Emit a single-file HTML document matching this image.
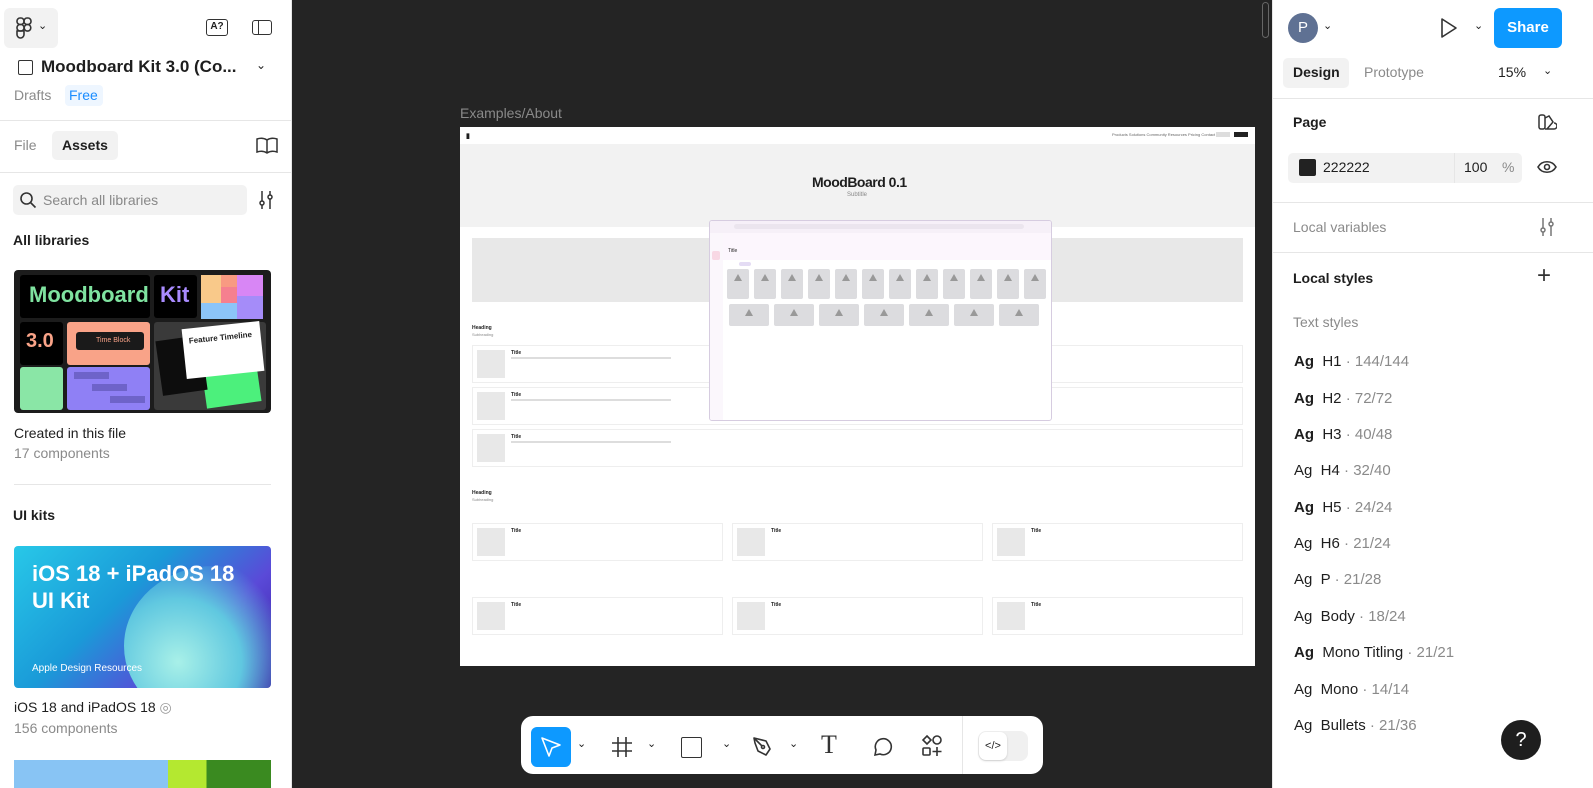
<!DOCTYPE html>
<html><head><meta charset="utf-8"><style>
*{box-sizing:border-box;margin:0;padding:0}
body{width:1593px;height:788px;overflow:hidden;background:#242424;font-family:"Liberation Sans",sans-serif;color:#1e1e1e;position:relative}
.abs{position:absolute}
.lp{left:0;top:0;width:292px;height:788px;background:#fff;border-right:1px solid #e6e6e6}
.rp{left:1272px;top:0;width:321px;height:788px;background:#fff;border-left:1px solid #e6e6e6}
.t{position:absolute;white-space:nowrap}
.hr{position:absolute;height:1px;background:#e6e6e6}
.g{color:#8a8a8a}
.card{position:absolute;background:#fff;border:1px solid #eee}
.ph{position:absolute;background:#e8e8e8}
.tile{position:absolute;width:22px;height:30px;background:#dcdcdf;border-radius:2px}
.tile::after{content:"";position:absolute;left:50%;top:5px;margin-left:-4px;border:4px solid transparent;border-bottom:7px solid #999;border-top:0}
</style></head><body>
<div class="abs lp">
 <div class="abs" style="left:4px;top:8px;width:54px;height:40px;background:#f2f2f2;border-radius:6px"></div>
 <svg class="abs" style="left:16px;top:17px" width="16" height="22" viewBox="0 0 16 22" fill="none" stroke="#333" stroke-width="1.6"><rect x="1" y="1" width="7" height="6.5" rx="3"/><rect x="8" y="1" width="7" height="6.5" rx="3"/><rect x="1" y="7.5" width="7" height="6.5" rx="3"/><circle cx="11.5" cy="10.8" r="3.3"/><path d="M1 14h7v3.5a3.5 3.5 0 1 1-7 0z"/></svg>
 <div class="t" style="left:38px;top:19px;font-size:11px">⌄</div>
 <div class="abs" style="left:206px;top:19px;width:22px;height:17px;border:1.5px solid #333;border-radius:3px;font-size:10px;font-weight:bold;text-align:center;line-height:14px">A?</div>
 <div class="abs" style="left:252px;top:20px;width:20px;height:15px;border:1.5px solid #333;border-radius:3px"><div style="width:6px;height:100%;border-right:1.5px solid #333"></div></div>
 <div class="abs" style="left:18px;top:60px;width:15px;height:15px;border:1.6px solid #333;border-radius:2px"></div>
 <div class="t" style="left:41px;top:57px;font-size:17px;font-weight:bold">Moodboard Kit 3.0 (Co...</div>
 <div class="t" style="left:256px;top:58px;font-size:12px">⌄</div>
 <div class="t g" style="left:14px;top:87px;font-size:14px">Drafts</div>
 <div class="abs" style="left:65px;top:85px;width:38px;height:21px;background:#eef6ff;border-radius:4px"></div>
 <div class="t" style="left:69px;top:87px;font-size:14px;color:#1a8cff">Free</div>
 <div class="hr" style="left:0;top:120px;width:292px"></div>
 <div class="t g" style="left:14px;top:137px;font-size:14px">File</div>
 <div class="abs" style="left:52px;top:131px;width:66px;height:29px;background:#f2f2f2;border-radius:5px"></div>
 <div class="t" style="left:62px;top:137px;font-size:14px;font-weight:bold">Assets</div>
 <svg class="abs" style="left:256px;top:137px" width="22" height="17" viewBox="0 0 22 17" fill="none" stroke="#333" stroke-width="1.5"><path d="M11 3C8 1 4 1 1 2v13c3-1 7-1 10 1 3-2 7-2 10-1V2c-3-1-7-1-10 1zM11 3v13"/></svg>
 <div class="hr" style="left:0;top:172px;width:292px"></div>
 <div class="abs" style="left:13px;top:185px;width:234px;height:30px;background:#f2f2f2;border-radius:5px"></div>
 <svg class="abs" style="left:19px;top:191px" width="18" height="18" viewBox="0 0 18 18" fill="none" stroke="#333" stroke-width="1.6"><circle cx="7.5" cy="7.5" r="5.5"/><path d="M11.5 11.5l5 5"/></svg>
 <div class="t g" style="left:43px;top:192px;font-size:14px;color:#888">Search all libraries</div>
 <svg class="abs" style="left:257px;top:190px" width="18" height="20" viewBox="0 0 18 20" fill="none" stroke="#333" stroke-width="1.5"><path d="M5 1v10M5 15v4M13 1v4M13 9v10"/><circle cx="5" cy="13" r="2"/><circle cx="13" cy="7" r="2"/></svg>
 <div class="t" style="left:13px;top:232px;font-size:14px;font-weight:bold">All libraries</div>
 <div class="abs" style="left:14px;top:270px;width:257px;height:143px;background:#1c1c1c;border-radius:4px;overflow:hidden">
  <div class="abs" style="left:6px;top:5px;width:130px;height:43px;background:#000;border-radius:3px"></div>
  <div class="t" style="left:15px;top:12px;font-size:22px;font-weight:bold;color:#7fe3a0">Moodboard</div>
  <div class="abs" style="left:140px;top:5px;width:43px;height:43px;background:#000;border-radius:3px"></div>
  <div class="t" style="left:146px;top:12px;font-size:22px;font-weight:bold;color:#a98bff">Kit</div>
  <div class="abs" style="left:187px;top:5px;width:20px;height:28px;background:#f9c98a"></div>
  <div class="abs" style="left:207px;top:5px;width:16px;height:12px;background:#f89a82"></div>
  <div class="abs" style="left:207px;top:17px;width:16px;height:16px;background:#f5808f"></div>
  <div class="abs" style="left:223px;top:5px;width:26px;height:21px;background:#d886f5"></div>
  <div class="abs" style="left:187px;top:33px;width:36px;height:16px;background:#8cc4f8"></div>
  <div class="abs" style="left:223px;top:26px;width:26px;height:23px;background:#a58cf9"></div>
  <div class="abs" style="left:6px;top:52px;width:43px;height:43px;background:#000;border-radius:3px"></div>
  <div class="t" style="left:12px;top:60px;font-size:20px;font-weight:bold;color:#f9a388">3.0</div>
  <div class="abs" style="left:53px;top:52px;width:83px;height:43px;background:#f9a388;border-radius:3px"></div>
  <div class="abs" style="left:62px;top:62px;width:68px;height:18px;background:#1a1a1a;border-radius:3px;font-size:7px;color:#f9a388;padding:5px 0 0 20px">Time Block</div>
  <div class="abs" style="left:6px;top:97px;width:43px;height:43px;background:#8ae6a6;border-radius:3px"></div>
  <div class="abs" style="left:53px;top:97px;width:83px;height:43px;background:#8f80f5;border-radius:3px"></div>
  <div class="abs" style="left:60px;top:102px;width:35px;height:7px;background:#6e63c9"></div>
  <div class="abs" style="left:78px;top:114px;width:35px;height:7px;background:#6e63c9"></div>
  <div class="abs" style="left:96px;top:126px;width:35px;height:7px;background:#6e63c9"></div>
  <div class="abs" style="left:140px;top:52px;width:112px;height:88px;background:#3a3a3a;border-radius:3px"></div>
  <div class="abs" style="left:190px;top:95px;width:55px;height:40px;background:#4cf07c;transform:rotate(-8deg)"></div>
  <div class="abs" style="left:145px;top:68px;width:45px;height:55px;background:#0d0d0d;transform:rotate(-8deg)"></div>
  <div class="abs" style="left:170px;top:55px;width:78px;height:50px;background:#fff;transform:rotate(-6deg);font-size:8px;font-weight:bold;padding:8px 0 0 6px">Feature Timeline</div>
 </div>
 <div class="t" style="left:14px;top:425px;font-size:14px">Created in this file</div>
 <div class="t g" style="left:14px;top:445px;font-size:14px">17 components</div>
 <div class="hr" style="left:14px;top:484px;width:257px"></div>
 <div class="t" style="left:13px;top:507px;font-size:14px;font-weight:bold">UI kits</div>
 <div class="abs" style="left:14px;top:546px;width:257px;height:142px;border-radius:4px;overflow:hidden;background:linear-gradient(135deg,#28c8e8 0%,#1a9ad8 40%,#5a4ad8 70%,#3a1aa0 100%)">
  <div class="abs" style="left:110px;top:20px;width:180px;height:160px;border-radius:50%;background:radial-gradient(circle at 30% 60%,#a8f0e8 0%,#60c8e0 40%,transparent 70%)"></div>
  <div class="t" style="left:18px;top:14px;font-size:22px;font-weight:bold;color:#fff;line-height:27px">iOS 18 + iPadOS 18<br>UI Kit</div>
  <div class="t" style="left:18px;top:117px;font-size:10px;color:#fff">Apple Design Resources</div>
 </div>
 <div class="t" style="left:14px;top:699px;font-size:14px">iOS 18 and iPadOS 18 <span style="color:#999">◎</span></div>
 <div class="t g" style="left:14px;top:720px;font-size:14px">156 components</div>
 <div class="abs" style="left:14px;top:760px;width:257px;height:28px;background:linear-gradient(90deg,#88c4f4 0 60%,#b4e830 60% 75%,#3a8a20 75%)"></div>
</div>
<div class="abs" style="left:1262px;top:2px;width:7px;height:36px;border:1px solid #666;border-radius:4px"></div>
<div class="t" style="left:460px;top:105px;font-size:14px;color:#8a8a8a">Examples/About</div>
<div class="abs" style="left:460px;top:127px;width:795px;height:539px;background:#fff;overflow:hidden">
 <div class="t" style="left:6px;top:5px;font-size:7px;font-weight:bold">▮</div>
 <div class="t" style="left:652px;top:5px;font-size:4px;color:#666">Products Solutions Community Resources Pricing Contact</div>
 <div class="abs" style="left:756px;top:5px;width:14px;height:5px;background:#ddd"></div>
 <div class="abs" style="left:774px;top:5px;width:14px;height:5px;background:#222"></div>
 <div class="abs" style="left:0;top:17px;width:795px;height:83px;background:#f2f2f2"></div>
 <div class="t" style="left:352px;top:47px;font-size:14px;font-weight:bold;letter-spacing:-0.5px">MoodBoard 0.1</div>
 <div class="t" style="left:387px;top:65px;font-size:6px;color:#888">Subtitle</div>
 <div class="abs" style="left:12px;top:111px;width:771px;height:64px;background:#e8e8e8"></div>
 <div class="t" style="left:12px;top:198px;font-size:5px;font-weight:bold">Heading</div>
 <div class="t" style="left:12px;top:205px;font-size:4px;color:#888">Subheading</div>
 <div class="card" style="left:12px;top:218px;width:771px;height:38px"><div class="ph" style="left:4px;top:4px;width:28px;height:28px"></div><div class="t" style="left:38px;top:4px;font-size:5px;font-weight:bold">Title</div><div class="abs" style="left:38px;top:11px;width:160px;height:2px;background:#ddd"></div></div>
 <div class="card" style="left:12px;top:260px;width:771px;height:38px"><div class="ph" style="left:4px;top:4px;width:28px;height:28px"></div><div class="t" style="left:38px;top:4px;font-size:5px;font-weight:bold">Title</div><div class="abs" style="left:38px;top:11px;width:160px;height:2px;background:#ddd"></div></div>
 <div class="card" style="left:12px;top:302px;width:771px;height:38px"><div class="ph" style="left:4px;top:4px;width:28px;height:28px"></div><div class="t" style="left:38px;top:4px;font-size:5px;font-weight:bold">Title</div><div class="abs" style="left:38px;top:11px;width:160px;height:2px;background:#ddd"></div></div>
 <div class="t" style="left:12px;top:363px;font-size:5px;font-weight:bold">Heading</div>
 <div class="t" style="left:12px;top:370px;font-size:4px;color:#888">Subheading</div>
 <div class="card" style="left:12px;top:396px;width:251px;height:38px"><div class="ph" style="left:4px;top:4px;width:28px;height:28px"></div><div class="t" style="left:38px;top:4px;font-size:5px;font-weight:bold">Title</div></div>
 <div class="card" style="left:272px;top:396px;width:251px;height:38px"><div class="ph" style="left:4px;top:4px;width:28px;height:28px"></div><div class="t" style="left:38px;top:4px;font-size:5px;font-weight:bold">Title</div></div>
 <div class="card" style="left:532px;top:396px;width:251px;height:38px"><div class="ph" style="left:4px;top:4px;width:28px;height:28px"></div><div class="t" style="left:38px;top:4px;font-size:5px;font-weight:bold">Title</div></div>
 <div class="card" style="left:12px;top:470px;width:251px;height:38px"><div class="ph" style="left:4px;top:4px;width:28px;height:28px"></div><div class="t" style="left:38px;top:4px;font-size:5px;font-weight:bold">Title</div></div>
 <div class="card" style="left:272px;top:470px;width:251px;height:38px"><div class="ph" style="left:4px;top:4px;width:28px;height:28px"></div><div class="t" style="left:38px;top:4px;font-size:5px;font-weight:bold">Title</div></div>
 <div class="card" style="left:532px;top:470px;width:251px;height:38px"><div class="ph" style="left:4px;top:4px;width:28px;height:28px"></div><div class="t" style="left:38px;top:4px;font-size:5px;font-weight:bold">Title</div></div>
 <div class="abs" style="left:249px;top:93px;width:343px;height:201px;background:#fff;border:1.5px solid #d6cce0;border-radius:3px;overflow:hidden">
  <div class="abs" style="left:0;top:0;width:343px;height:12px;background:#f6f0f8"></div>
  <div class="abs" style="left:24px;top:3px;width:290px;height:5px;background:#ebe5ee;border-radius:3px"></div>
  <div class="abs" style="left:0;top:12px;width:13px;height:189px;background:#fbf7fc"></div>
  <div class="abs" style="left:2px;top:30px;width:8px;height:9px;background:#f8d8e4;border-radius:2px"></div>
  <div class="abs" style="left:13px;top:12px;width:330px;height:27px;background:#fcf6fd"></div>
  <div class="t" style="left:18px;top:27px;font-size:5px">Title</div>
  <div class="abs" style="left:29px;top:41px;width:12px;height:4px;background:#e4dcf4;border-radius:2px"></div>
  <div style="position:absolute;left:17px;top:48px;width:320px">
   <div class="tile" style="left:0;top:0"></div><div class="tile" style="left:27px;top:0"></div><div class="tile" style="left:54px;top:0"></div><div class="tile" style="left:81px;top:0"></div><div class="tile" style="left:108px;top:0"></div><div class="tile" style="left:135px;top:0"></div><div class="tile" style="left:162px;top:0"></div><div class="tile" style="left:189px;top:0"></div><div class="tile" style="left:216px;top:0"></div><div class="tile" style="left:243px;top:0"></div><div class="tile" style="left:270px;top:0"></div><div class="tile" style="left:297px;top:0"></div>
   <div class="tile" style="left:2px;top:35px;width:40px;height:22px"></div><div class="tile" style="left:47px;top:35px;width:40px;height:22px"></div><div class="tile" style="left:92px;top:35px;width:40px;height:22px"></div><div class="tile" style="left:137px;top:35px;width:40px;height:22px"></div><div class="tile" style="left:182px;top:35px;width:40px;height:22px"></div><div class="tile" style="left:227px;top:35px;width:40px;height:22px"></div><div class="tile" style="left:272px;top:35px;width:40px;height:22px"></div>
  </div>
 </div>
</div>
<div class="abs" style="left:521px;top:716px;width:522px;height:58px;background:#fff;border-radius:12px"></div>
<div class="abs" style="left:531px;top:727px;width:40px;height:40px;background:#0d99ff;border-radius:6px"></div>
<svg class="abs" style="left:539px;top:735px" width="24" height="24" viewBox="0 0 24 24" fill="none" stroke="#fff" stroke-width="1.6" stroke-linejoin="round"><path d="M3 3l18 7-8 3-3 8z"/></svg>
<div class="t" style="left:577px;top:737px;font-size:11px">⌄</div>
<svg class="abs" style="left:610px;top:735px" width="24" height="24" viewBox="0 0 24 24" fill="none" stroke="#333" stroke-width="1.6"><path d="M8 2v20M16 2v20M2 8h20M2 16h20"/></svg>
<div class="t" style="left:647px;top:737px;font-size:11px">⌄</div>
<div class="abs" style="left:681px;top:737px;width:21px;height:21px;border:1.6px solid #333;border-radius:2px"></div>
<div class="t" style="left:722px;top:737px;font-size:11px">⌄</div>
<svg class="abs" style="left:752px;top:735px" width="24" height="24" viewBox="0 0 24 24" fill="none" stroke="#333" stroke-width="1.6" stroke-linejoin="round"><path d="M2 3l12 3 4 8-4 6-8-4-3-8z"/><circle cx="11" cy="12" r="1.5"/><path d="M2 3l8 8"/></svg>
<div class="t" style="left:789px;top:737px;font-size:11px">⌄</div>
<div class="t" style="left:821px;top:730px;font-size:26px;font-family:'Liberation Serif',serif;color:#333">T</div>
<svg class="abs" style="left:871px;top:735px" width="24" height="24" viewBox="0 0 24 24" fill="none" stroke="#333" stroke-width="1.6"><path d="M4 20l1-5a8 8 0 1 1 4 4z"/></svg>
<svg class="abs" style="left:920px;top:734px" width="24" height="24" viewBox="0 0 24 24" fill="none" stroke="#333" stroke-width="1.6"><path d="M7 2l4 4-4 4-4-4z"/><circle cx="17" cy="6" r="4"/><rect x="3" y="14" width="7" height="7" rx="1"/><path d="M17 13v9M12.5 17.5h9"/></svg>
<div class="abs" style="left:962px;top:716px;width:1px;height:58px;background:#e6e6e6"></div>
<div class="abs" style="left:978px;top:731px;width:50px;height:30px;background:#f0f0f0;border-radius:8px"></div>
<div class="abs" style="left:979px;top:732px;width:28px;height:28px;background:#fff;border-radius:7px;box-shadow:0 1px 2px rgba(0,0,0,.15);font-size:11px;text-align:center;line-height:28px">&lt;/&gt;</div>
<div class="abs rp">
 <div class="abs" style="left:15px;top:13px;width:30px;height:30px;border-radius:50%;background:#5f7193;color:#fff;font-size:15px;text-align:center;line-height:30px">P</div>
 <div class="t" style="left:50px;top:19px;font-size:11px">⌄</div>
 <svg class="abs" style="left:166px;top:17px" width="20" height="22" viewBox="0 0 20 22" fill="none" stroke="#333" stroke-width="1.6" stroke-linejoin="round"><path d="M3 2l14 9-14 9z"/></svg>
 <div class="t" style="left:201px;top:19px;font-size:11px">⌄</div>
 <div class="abs" style="left:221px;top:8px;width:68px;height:40px;background:#0d99ff;border-radius:6px;color:#fff;font-size:15px;font-weight:bold;text-align:center;line-height:40px">Share</div>
 <div class="abs" style="left:10px;top:58px;width:66px;height:30px;background:#f2f2f2;border-radius:5px"></div>
 <div class="t" style="left:20px;top:64px;font-size:14px;font-weight:bold">Design</div>
 <div class="t g" style="left:91px;top:64px;font-size:14px">Prototype</div>
 <div class="t" style="left:225px;top:64px;font-size:14px">15%</div>
 <div class="t" style="left:270px;top:64px;font-size:11px">⌄</div>
 <div class="hr" style="left:0;top:98px;width:321px"></div>
 <div class="t" style="left:20px;top:114px;font-size:14px;font-weight:bold">Page</div>
 <svg class="abs" style="left:264px;top:113px" width="20" height="18" viewBox="0 0 20 18" fill="none" stroke="#333" stroke-width="1.5"><rect x="2" y="2" width="6" height="14" rx="2"/><path d="M8 5l4-2 4 6-6 7M8 16h9a2 2 0 0 0 0-6"/></svg>
 <div class="abs" style="left:15px;top:153px;width:234px;height:30px;background:#f2f2f2;border-radius:5px"></div>
 <div class="abs" style="left:181px;top:153px;width:1px;height:30px;background:#e6e6e6"></div>
 <div class="abs" style="left:26px;top:159px;width:17px;height:17px;background:#222;border-radius:2px"></div>
 <div class="t" style="left:50px;top:159px;font-size:14px">222222</div>
 <div class="t" style="left:191px;top:159px;font-size:14px">100</div>
 <div class="t g" style="left:229px;top:159px;font-size:14px">%</div>
 <svg class="abs" style="left:264px;top:158px" width="20" height="18" viewBox="0 0 20 18" fill="none" stroke="#333" stroke-width="1.6"><path d="M1 9c4-7 14-7 18 0-4 7-14 7-18 0z"/><circle cx="10" cy="9" r="2.5"/></svg>
 <div class="hr" style="left:0;top:202px;width:321px"></div>
 <div class="t g" style="left:20px;top:219px;font-size:14px">Local variables</div>
 <svg class="abs" style="left:265px;top:217px" width="18" height="20" viewBox="0 0 18 20" fill="none" stroke="#777" stroke-width="1.5"><path d="M5 1v10M5 15v4M13 1v4M13 9v10"/><circle cx="5" cy="13" r="2"/><circle cx="13" cy="7" r="2"/></svg>
 <div class="hr" style="left:0;top:252px;width:321px"></div>
 <div class="t" style="left:20px;top:270px;font-size:14px;font-weight:bold">Local styles</div>
 <div class="t" style="left:264px;top:262px;font-size:24px;font-weight:300;color:#333">+</div>
 <div class="t g" style="left:20px;top:314px;font-size:14px">Text styles</div>
 <div class="t" style="left:21px;top:353px;font-size:15px"><b>Ag</b>&nbsp;&nbsp;H1 <span class="g">· 144/144</span></div>
 <div class="t" style="left:21px;top:390px;font-size:15px"><b>Ag</b>&nbsp;&nbsp;H2 <span class="g">· 72/72</span></div>
 <div class="t" style="left:21px;top:426px;font-size:15px"><b>Ag</b>&nbsp;&nbsp;H3 <span class="g">· 40/48</span></div>
 <div class="t" style="left:21px;top:462px;font-size:15px">Ag&nbsp;&nbsp;H4 <span class="g">· 32/40</span></div>
 <div class="t" style="left:21px;top:499px;font-size:15px"><b>Ag</b>&nbsp;&nbsp;H5 <span class="g">· 24/24</span></div>
 <div class="t" style="left:21px;top:535px;font-size:15px">Ag&nbsp;&nbsp;H6 <span class="g">· 21/24</span></div>
 <div class="t" style="left:21px;top:571px;font-size:15px">Ag&nbsp;&nbsp;P <span class="g">· 21/28</span></div>
 <div class="t" style="left:21px;top:608px;font-size:15px">Ag&nbsp;&nbsp;Body <span class="g">· 18/24</span></div>
 <div class="t" style="left:21px;top:644px;font-size:15px"><b>Ag</b>&nbsp;&nbsp;Mono Titling <span class="g">· 21/21</span></div>
 <div class="t" style="left:21px;top:681px;font-size:15px">Ag&nbsp;&nbsp;Mono <span class="g">· 14/14</span></div>
 <div class="t" style="left:21px;top:717px;font-size:15px">Ag&nbsp;&nbsp;Bullets <span class="g">· 21/36</span></div>
 <div class="abs" style="left:228px;top:720px;width:40px;height:40px;border-radius:50%;background:#1e1e1e;color:#fff;font-size:20px;text-align:center;line-height:40px">?</div>
</div>
</body></html>
